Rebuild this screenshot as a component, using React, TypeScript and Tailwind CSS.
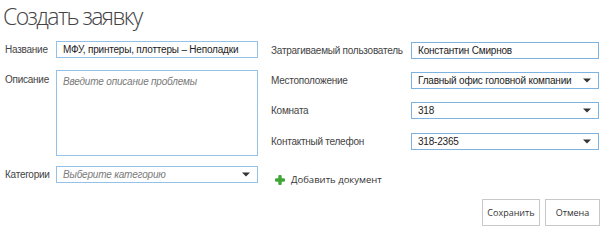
import React from 'react';

const arial = { fontFamily: '"Liberation Sans", Arial, sans-serif' };
const segoe = { fontFamily: '"Open Sans", "Noto Sans", sans-serif' };

const Caret: React.FC = () => (
  <svg width="8" height="5" viewBox="0 0 8 5" className="shrink-0">
    <path d="M0 0.5 L8 0.5 L4 4.5 Z" fill="#333" />
  </svg>
);

const PlusIcon: React.FC = () => (
  <svg width="10" height="10" viewBox="0 0 10 10" className="shrink-0">
    <path d="M5 1.5 V8.5 M1.5 5 H8.5" stroke="#3fa535" strokeWidth="3.4" strokeLinecap="round" />
  </svg>
);

interface FieldProps {
  value: string;
  placeholder?: boolean;
  select?: boolean;
  border: string;
  width: string;
}

const Field: React.FC<FieldProps> = ({ value, placeholder, select, border, width }) => (
  <div
    className={`h-[17px] ${width} shrink-0 border ${border} bg-white flex items-center pl-[6px] pr-[7px] text-[10px] tracking-[-0.2px] leading-none whitespace-nowrap ${
      placeholder ? 'italic text-[#7a7a7a]' : 'text-[#222]'
    }`}
    style={arial}
  >
    <span className="flex-1 overflow-hidden">{value}</span>
    {select && <Caret />}
  </div>
);

const rightRows = [
  { label: 'Затрагиваемый пользователь', value: 'Константин Смирнов', select: false },
  { label: 'Местоположение', value: 'Главный офис головной компании', select: true },
  { label: 'Комната', value: '318', select: true },
  { label: 'Контактный телефон', value: '318-2365', select: true },
];

export default function App() {
  return (
    <div className="w-[610px] h-[229px] bg-white overflow-hidden">
      <div className="h-[41px] pl-[3px] pt-[1px]">
        <h1 className="text-[23px] font-light leading-[30px] tracking-[-1.6px] text-[#444]" style={segoe}>
          Создать заявку
        </h1>
      </div>

      <div className="flex">
        {/* left column */}
        <div className="ml-[5px] w-[253px] shrink-0 flex flex-col text-[10px] tracking-[-0.25px] text-[#444]" style={arial}>
          <div className="flex items-center">
            <div className="w-[51px] shrink-0 whitespace-nowrap">Название</div>
            <Field value="МФУ, принтеры, плоттеры – Неполадки" border="border-[#93c1e8]" width="w-[202px]" />
          </div>
          <div className="flex mt-[12px]">
            <div className="w-[51px] shrink-0 pt-[2px] whitespace-nowrap">Описание</div>
            <div className="w-[202px] h-[86px] shrink-0 border border-[#93c1e8] bg-white pl-[6px] pt-[3px] italic tracking-[-0.2px] text-[#7a7a7a]">
              Введите описание проблемы
            </div>
          </div>
          <div className="flex items-center mt-[10px]">
            <div className="w-[51px] shrink-0 whitespace-nowrap">Категории</div>
            <Field value="Выберите категорию" placeholder select border="border-[#93c1e8]" width="w-[202px]" />
          </div>
        </div>

        {/* right column */}
        <div className="ml-[13px] mt-[1px] flex flex-col">
          <div className="flex flex-col gap-[13px] text-[10px] tracking-[-0.25px] text-[#444]" style={arial}>
            {rightRows.map((r, i) => (
              <div key={r.label} className={`flex items-center ${i === 3 ? 'mt-[1px]' : ''}`}>
                <div className="w-[140px] shrink-0 whitespace-nowrap">{r.label}</div>
                <Field value={r.value} select={r.select} border="border-[#7db3de]" width="w-[188px]" />
              </div>
            ))}
          </div>
          <div className="flex items-center gap-[6px] mt-[23px] ml-[4px] text-[9.5px] text-[#333]" style={segoe}>
            <PlusIcon />
            <span>Добавить документ</span>
          </div>
          <div className="flex justify-end gap-[5px] mt-[12px] -mr-[1px] text-[9px] text-[#333]" style={segoe}>
            <button className="w-[58px] h-[27px] border border-[#c8c8c8] bg-white">Сохранить</button>
            <button className="w-[55px] h-[27px] border border-[#c8c8c8] bg-white">Отмена</button>
          </div>
        </div>
      </div>
    </div>
  );
}
